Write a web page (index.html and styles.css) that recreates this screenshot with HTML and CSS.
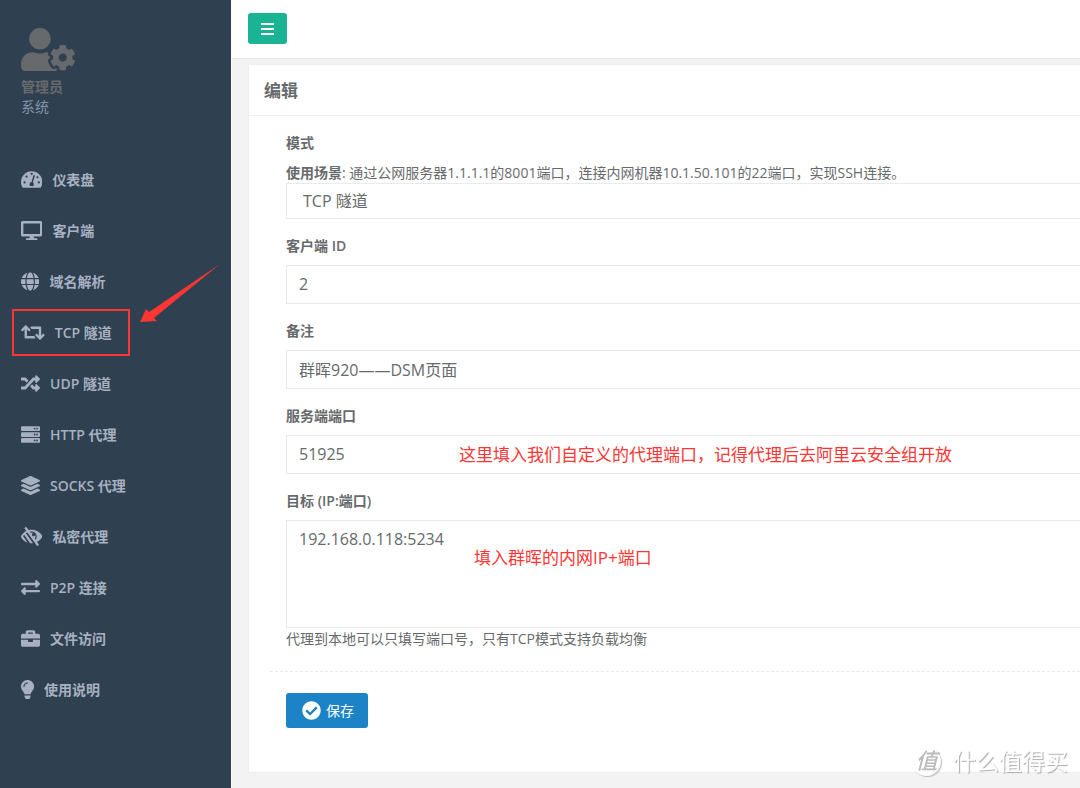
FILE: index.html
```html
<!DOCTYPE html>
<html lang="zh-CN">
<head>
<meta charset="utf-8">
<meta name="viewport" content="width=device-width, initial-scale=1">
<title>编辑 - TCP 隧道</title>
<link rel="stylesheet" href="styles.css">
</head>
<body>
<div class="layout">
  <aside class="sidebar">
    <div class="profile">
      <svg class="profile-icon" viewBox="0 0 640 512" aria-hidden="true"><path d="M610.5 373.3c2.6-14.1 2.6-28.5 0-42.6l25.8-14.9c3-1.7 4.3-5.2 3.3-8.5-6.7-21.6-18.2-41.2-33.2-57.4-2.3-2.5-6-3.1-9-1.4l-25.8 14.9c-10.9-9.3-23.4-16.5-36.9-21.3v-29.8c0-3.4-2.4-6.4-5.7-7.1-22.3-5-45-4.8-66.2 0-3.3.7-5.7 3.7-5.7 7.1v29.8c-13.5 4.8-26 12-36.9 21.3l-25.8-14.9c-2.9-1.7-6.7-1.1-9 1.4-15 16.2-26.5 35.8-33.2 57.4-1 3.3.4 6.8 3.3 8.5l25.8 14.9c-2.6 14.1-2.6 28.5 0 42.6l-25.8 14.9c-3 1.7-4.3 5.2-3.3 8.5 6.7 21.6 18.2 41.1 33.2 57.4 2.3 2.5 6 3.1 9 1.4l25.8-14.9c10.9 9.3 23.4 16.5 36.9 21.3v29.8c0 3.4 2.4 6.4 5.7 7.1 22.3 5 45 4.8 66.2 0 3.3-.7 5.7-3.7 5.7-7.1v-29.8c13.5-4.8 26-12 36.9-21.3l25.8 14.9c2.9 1.7 6.7 1.1 9-1.4 15-16.2 26.5-35.8 33.2-57.4 1-3.3-.4-6.8-3.3-8.5l-25.8-14.9zM496 400.5c-26.8 0-48.5-21.8-48.5-48.5s21.8-48.5 48.5-48.5 48.5 21.8 48.5 48.5-21.7 48.5-48.5 48.5zM224 256c70.7 0 128-57.3 128-128S294.7 0 224 0 96 57.3 96 128s57.3 128 128 128zm201.2 226.5c-2.3-1.2-4.6-2.6-6.8-3.9l-7.9 4.6c-6 3.4-12.8 5.3-19.6 5.3-10.9 0-21.4-4.6-28.9-12.6-18.3-19.8-32.3-43.9-40.2-69.6-5.5-17.7 1.9-36.4 17.9-45.7l7.9-4.6c-.1-2.6-.1-5.2 0-7.8l-7.9-4.6c-16-9.2-23.4-28-17.9-45.7.9-2.9 2.2-5.8 3.2-8.7-3.8-.3-7.5-1.2-11.4-1.2h-16.7c-22.2 10.2-46.9 16-72.9 16s-50.6-5.8-72.9-16h-16.7C60.2 288 0 348.2 0 422.4V464c0 26.5 21.5 48 48 48h352c10.1 0 19.5-3.2 27.2-8.5-1.2-3.8-2-7.7-2-11.8v-9.2z"/></svg>
      <strong class="profile-name">管理员</strong>
      <span class="profile-role">系统</span>
    </div>
    <nav>
      <ul class="menu">
        <li><a class="menu-link" href="#"><svg class="icon" viewBox="0 0 576 512" aria-hidden="true"><path d="M288 32C129 32 0 161 0 320c0 53 14 102 39 145 6 9 16 15 28 15h442c12 0 22-6 28-15 25-43 39-92 39-145C576 161 447 32 288 32z"/><g class="icon-cut"><circle cx="288" cy="104" r="30"/><circle cx="148" cy="178" r="30"/><circle cx="96" cy="336" r="30"/><circle cx="480" cy="336" r="30"/><circle cx="442" cy="196" r="28"/><path d="M356 132c13 4 20 17 16 30l-51 170c20 16 28 38 25 64-2 14-8 26-17 36h-82c-35-42-17-106 38-112l46-168c3-13 12-23 25-20z"/></g></svg>仪表盘</a></li>
        <li><a class="menu-link" href="#"><svg class="icon" viewBox="0 0 576 512" aria-hidden="true"><path d="M528 0H48C21.5 0 0 21.5 0 48v320c0 26.5 21.5 48 48 48h192l-16 48h-72c-13.3 0-24 10.7-24 24s10.7 24 24 24h272c13.3 0 24-10.7 24-24s-10.7-24-24-24h-72l-16-48h192c26.5 0 48-21.5 48-48V48c0-26.5-21.5-48-48-48zm-16 352H64V64h448v288z"/></svg>客户端</a></li>
        <li><a class="menu-link" href="#"><svg class="icon" viewBox="0 0 496 512" aria-hidden="true"><path d="M336.500 160C322 70.700 287.800 8 248 8s-74 62.700-88.500 152h177zM152 256c0 22.200 1.200 43.500 3.300 64h185.300c2.100-20.500 3.300-41.800 3.300-64s-1.200-43.500-3.300-64H155.300c-2.100 20.500-3.300 41.800-3.300 64zm324.700-96c-28.600-67.900-86.500-120.400-158-141.600 24.400 33.800 41.200 84.700 50 141.600h108zM177.200 18.400C105.800 39.600 47.800 92.100 19.300 160h108c8.700-56.900 25.500-107.800 49.900-141.600zM487.400 192H372.700c2.100 21 3.300 42.500 3.300 64s-1.200 43-3.300 64h114.600c5.500-20.500 8.600-41.800 8.600-64s-3.100-43.500-8.500-64zM120 256c0-21.500 1.200-43 3.300-64H8.600C3.200 212.500 0 233.800 0 256s3.200 43.500 8.600 64h114.600c-2-21-3.200-42.500-3.200-64zm39.500 96c14.500 89.300 48.700 152 88.500 152s74-62.700 88.500-152h-177zm159.300 141.600c71.400-21.200 129.400-73.700 158-141.600h-108c-8.800 56.900-25.600 107.800-50 141.600zM19.300 352c28.600 67.900 86.500 120.400 158 141.600-24.400-33.800-41.200-84.700-50-141.600h-108z"/></svg>域名解析</a></li>
        <li class="menu-marked"><a class="menu-link" href="#" aria-current="page"><svg class="icon" viewBox="0 0 640 512" aria-hidden="true"><path d="M629.657 343.598L528.971 444.284c-9.373 9.372-24.568 9.372-33.941 0L394.343 343.598c-9.373-9.373-9.373-24.569 0-33.941l10.823-10.823c9.562-9.562 25.133-9.340 34.419.492L480 342.118V160H292.451a24.005 24.005 0 0 1-16.971-7.029l-16-16C244.361 121.851 255.069 96 276.451 96H520c13.255 0 24 10.745 24 24v222.118l40.416-42.792c9.285-9.831 24.856-10.054 34.419-.492l10.823 10.823c9.372 9.372 9.372 24.569-.001 33.941zm-265.138 15.431A23.999 23.999 0 0 0 347.548 352H160V169.881l40.416 42.792c9.286 9.831 24.856 10.054 34.419.491l10.822-10.822c9.373-9.373 9.373-24.569 0-33.941L144.971 67.716c-9.373-9.373-24.569-9.373-33.941 0L10.343 168.402c-9.373 9.373-9.373 24.569 0 33.941l10.822 10.822c9.562 9.562 25.133 9.340 34.419-.491L96 169.882V392c0 13.255 10.745 24 24 24h243.549c21.382 0 32.090-25.851 16.971-40.971l-16.001-16z"/></svg>TCP 隧道</a>
          <svg class="arrow" viewBox="0 0 80 60" aria-hidden="true"><path d="M0 58L6 45L9 48L80 0L14 54L17 57z"/></svg></li>
        <li><a class="menu-link" href="#"><svg class="icon" viewBox="0 0 512 512" aria-hidden="true"><path d="M504.971 359.029c9.373 9.373 9.373 24.569 0 33.941l-80 79.984c-15.010 15.010-40.971 4.490-40.971-16.971V416h-58.785a12.004 12.004 0 0 1-8.773-3.812l-70.556-75.596 53.333-57.143L352 336h32v-39.981c0-21.438 25.943-31.998 40.971-16.971l80 79.981zM12 176h84l52.781 56.551 53.333-57.143-70.556-75.596A11.999 11.999 0 0 0 122.785 96H12c-6.627 0-12 5.373-12 12v56c0 6.627 5.373 12 12 12zm372 0v39.984c0 21.460 25.961 31.980 40.971 16.971l80-79.984c9.373-9.373 9.373-24.569 0-33.941l-80-79.981C409.943 24.021 384 34.582 384 56.019V96h-58.785a12.004 12.004 0 0 0-8.773 3.812L96 336H12c-6.627 0-12 5.373-12 12v56c0 6.627 5.373 12 12 12h110.785c3.326 0 6.503-1.381 8.773-3.812L352 176h32z"/></svg>UDP 隧道</a></li>
        <li><a class="menu-link" href="#"><svg class="icon" viewBox="0 0 512 512" aria-hidden="true"><rect y="32" width="512" height="128" rx="32"/><rect y="192" width="512" height="128" rx="32"/><rect y="352" width="512" height="128" rx="32"/><g class="icon-cut"><circle cx="368" cy="96" r="24"/><circle cx="432" cy="96" r="24"/><circle cx="368" cy="256" r="24"/><circle cx="432" cy="256" r="24"/><circle cx="368" cy="416" r="24"/><circle cx="432" cy="416" r="24"/></g></svg>HTTP 代理</a></li>
        <li><a class="menu-link" href="#"><svg class="icon" viewBox="0 0 512 512" aria-hidden="true"><path d="M12.410 148.020l232.940 105.670c6.800 3.090 14.490 3.090 21.290 0l232.940-105.670c16.550-7.510 16.550-32.520 0-40.030L266.650 2.310a25.607 25.607 0 0 0-21.290 0L12.410 107.980c-16.550 7.510-16.550 32.530 0 40.040zm487.180 88.280l-58.090-26.330-161.640 73.270c-7.560 3.430-15.590 5.170-23.860 5.170s-16.290-1.740-23.860-5.170L70.510 209.970l-58.100 26.330c-16.550 7.500-16.550 32.500 0 40l232.940 105.590c6.800 3.080 14.490 3.080 21.290 0L499.590 276.300c16.550-7.500 16.550-32.500 0-40zm0 127.800l-57.870-26.230-161.860 73.370c-7.560 3.430-15.590 5.170-23.860 5.170s-16.290-1.740-23.860-5.170L70.290 337.870 12.410 364.100c-16.550 7.500-16.550 32.500 0 40l232.940 105.590c6.800 3.080 14.490 3.080 21.290 0L499.590 404.100c16.550-7.500 16.550-32.500 0-40z"/></svg>SOCKS 代理</a></li>
        <li><a class="menu-link" href="#"><svg class="icon" viewBox="0 0 576 512" aria-hidden="true"><path d="M569.344 231.631C512.960 135.949 407.810 72 288 72c-28.468 0-56.102 3.619-82.451 10.414L152.778 10.240c-7.601-10.858-22.564-13.500-33.423-5.900l-13.114 9.178c-10.860 7.601-13.502 22.566-5.900 33.426l43.131 58.395C89.449 131.730 40.228 174.683 6.682 231.581c-.010.017-.023.033-.034.050-8.765 14.875-8.964 33.528 0 48.739 38.500 65.332 99.742 115.862 172.859 141.349L55.316 244.302A272.194 272.194 0 0 1 83.610 208.390l119.400 170.580h.010l40.630 58.040a330.055 330.055 0 0 0 78.940 1.170l-189.980-271.400a277.628 277.628 0 0 1 38.777-21.563l251.836 356.544c7.601 10.858 22.564 13.499 33.423 5.900l13.114-9.178c10.860-7.601 13.502-22.567 5.900-33.426l-43.120-58.377-.007-.009c57.161-27.978 104.835-72.040 136.810-126.301a47.938 47.938 0 0 0 .001-48.739zM390.026 345.940l-19.066-27.230c24.682-32.567 27.711-76.353 8.800-111.680v.030c0 23.650-19.170 42.820-42.820 42.820-23.828 0-42.820-19.349-42.820-42.820 0-23.650 19.170-42.820 42.820-42.820h.030c-24.750-13.249-53.522-15.643-79.510-7.680l-19.068-27.237C253.758 123.306 270.488 120 288 120c75.162 0 136 60.827 136 136 0 34.504-12.833 65.975-33.974 89.940z"/></svg>私密代理</a></li>
        <li><a class="menu-link" href="#"><svg class="icon" viewBox="0 0 512 512" aria-hidden="true"><path d="M0 168v-16c0-13.255 10.745-24 24-24h360V80c0-21.367 25.899-32.042 40.971-16.971l80 80c9.372 9.373 9.372 24.569 0 33.941l-80 80C409.956 271.982 384 261.456 384 240v-48H24c-13.255 0-24-10.745-24-24zm488 152H128v-48c0-21.314-25.862-32.080-40.971-16.971l-80 80c-9.372 9.373-9.372 24.569 0 33.941l80 80C102.057 463.997 128 453.437 128 432v-48h360c13.255 0 24-10.745 24-24v-16c0-13.255-10.745-24-24-24z"/></svg>P2P 连接</a></li>
        <li><a class="menu-link" href="#"><svg class="icon" viewBox="0 0 512 512" aria-hidden="true"><path d="M320 336c0 8.840-7.160 16-16 16h-96c-8.840 0-16-7.160-16-16v-48H0v144c0 25.600 22.400 48 48 48h416c25.600 0 48-22.400 48-48V288H320v48zm144-208h-80V80c0-25.600-22.400-48-48-48H176c-25.600 0-48 22.400-48 48v48H48c-25.600 0-48 22.400-48 48v80h512v-80c0-25.600-22.400-48-48-48zm-144 0H192V96h128v32z"/></svg>文件访问</a></li>
        <li><a class="menu-link" href="#"><svg class="icon" viewBox="0 0 352 512" aria-hidden="true"><path d="M96.060 454.350c.010 6.290 1.870 12.450 5.360 17.690l17.090 25.690a31.990 31.990 0 0 0 26.640 14.280h61.710a31.990 31.990 0 0 0 26.640-14.280l17.090-25.690a31.989 31.989 0 0 0 5.360-17.690l.040-38.350H96.010l.050 38.350zM0 176c0 44.370 16.450 84.850 43.560 115.780 16.520 18.850 42.360 58.230 52.210 91.450.040.260.070.520.110.780h160.240c.040-.260.070-.510.110-.780 9.850-33.220 35.690-72.600 52.210-91.450C335.550 260.850 352 220.370 352 176 352 78.610 272.910-.3 175.450 0 73.440.310 0 82.970 0 176zm176-80c-44.110 0-80 35.890-80 80 0 8.840-7.160 16-16 16s-16-7.160-16-16c0-61.760 50.240-112 112-112 8.840 0 16 7.160 16 16s-7.160 16-16 16z"/></svg>使用说明</a></li>
      </ul>
    </nav>
  </aside>

  <div class="page">
    <header class="topbar">
      <button class="toggle" type="button" aria-label="菜单"><svg class="toggle-icon" viewBox="0 0 14 14" aria-hidden="true"><path d="M0 2h13M0 7h13M0 12h13"/></svg></button>
    </header>
    <main class="card">
      <h1 class="card-title">编辑</h1>
      <form class="form">
        <div class="group">
          <label class="label" for="mode">模式</label>
          <p class="hint"><b>使用场景</b>: 通过公网服务器1.1.1.1的8001端口，连接内网机器10.1.50.101的22端口，实现SSH连接。</p>
          <select class="control select" id="mode"><option>TCP 隧道</option></select>
        </div>
        <div class="group">
          <label class="label" for="client">客户端 ID</label>
          <input class="control" id="client" type="text" value="2">
        </div>
        <div class="group">
          <label class="label" for="remark">备注</label>
          <input class="control" id="remark" type="text" value="群晖920——DSM页面">
        </div>
        <div class="group">
          <label class="label" for="port">服务端端口</label>
          <input class="control" id="port" type="text" value="51925">
          <span class="note note-port">这里填入我们自定义的代理端口，记得代理后去阿里云安全组开放</span>
        </div>
        <div class="group">
          <label class="label" for="target">目标 (IP:端口)</label>
          <textarea class="control textarea" id="target">192.168.0.118:5234</textarea>
          <span class="note note-target">填入群晖的内网IP+端口</span>
          <p class="hint">代理到本地可以只填写端口号，只有TCP模式支持负载均衡</p>
        </div>
        <div class="actions">
          <button class="save" type="button"><svg class="icon" viewBox="0 0 512 512" aria-hidden="true"><path d="M504 256c0 136.967-111.033 248-248 248S8 392.967 8 256 119.033 8 256 8s248 111.033 248 248zM227.314 387.314l184-184c6.248-6.248 6.248-16.379 0-22.627l-22.627-22.627c-6.248-6.249-16.379-6.249-22.628 0L216 308.118l-70.059-70.059c-6.248-6.248-16.379-6.248-22.628 0l-22.627 22.627c-6.248 6.248-6.248 16.379 0 22.627l104 104c6.249 6.249 16.379 6.249 22.628.001z"/></svg>保存</button>
        </div>
      </form>
    </main>
  </div>
</div>
<div class="watermark"><span class="watermark-badge">值</span><span>什么值得买</span></div>
</body>
</html>
```
FILE: styles.css
```css
*,
*::before {
  box-sizing: border-box;
}

body {
  margin: 0;
  background: #f3f3f4;
  color: #676a6c;
  font-family: "Open Sans", "Noto Sans CJK SC", sans-serif;
  font-size: 14px;
  line-height: 20px;
}

.layout {
  display: flex;
  min-height: 100vh;
}

/* Sidebar */
.sidebar {
  flex: 0 0 231px;
  background: #2f4050;
}

.profile {
  display: flex;
  flex-direction: column;
  padding: 28px 21px 37px;
}

.profile-icon {
  width: 54px;
  height: 43px;
  margin-bottom: 6px;
  fill: #676a6c;
}

.profile-name {
  color: #676a6c;
}

.profile-role {
  color: #8095a8;
}

.menu {
  margin: 0;
  padding: 0;
  list-style: none;
}

.menu-link {
  display: flex;
  align-items: center;
  gap: 10px;
  height: 51px;
  padding-left: 21px;
  color: #a7b1c2;
  font-weight: 600;
  text-decoration: none;
}

.icon {
  height: 19px;
  width: auto;
  fill: currentColor;
}

.icon-cut {
  fill: #2f4050;
}

.menu-marked {
  position: relative;
}

.menu-marked::before {
  content: "";
  position: absolute;
  left: 12px;
  top: 2px;
  width: 118px;
  height: 47px;
  border: 2px solid #fb3634;
  pointer-events: none;
}

.arrow {
  position: absolute;
  left: 140px;
  top: -43px;
  width: 80px;
  height: 60px;
  fill: #fb3634;
}

/* Page */
.page {
  flex: 1;
  min-width: 0;
  border-left: 1px solid #fff;
}

.topbar {
  padding: 13px 16px 14px;
  background: #fff;
  border-bottom: 1px solid #e7eaec;
}

.toggle {
  display: flex;
  align-items: center;
  justify-content: center;
  width: 39px;
  height: 31px;
  padding: 0;
  border: 0;
  border-radius: 3px;
  background: #1ab394;
}

.toggle-icon {
  width: 14px;
  height: 14px;
  fill: none;
  stroke: #fff;
  stroke-width: 2;
}

.card {
  margin: 5px 0 15px 16px;
  background: #fff;
  border: 1px solid #eceeef;
  border-right: 0;
}

.card-title {
  margin: 0;
  padding: 15px 15px 14px;
  border-bottom: 1px solid #eef0f1;
  font-size: 17px;
  line-height: 21px;
}

.form {
  padding: 17px 0 44px 21px;
}

.group {
  position: relative;
  padding: 0 0 17px 16px;
}

.label {
  display: block;
  margin-bottom: 9px;
  font-weight: 600;
}

.hint {
  margin: 0;
  line-height: 21px;
}

.control {
  display: block;
  width: 100%;
  height: 39px;
  padding: 0 12px 2px;
  border: 1px solid #e9eaeb;
  border-right: 0;
  border-radius: 1px 0 0 1px;
  background: #fff;
  color: inherit;
  font: inherit;
  font-size: 16px;
}

.select {
  height: 36px;
  padding: 0 16px;
  appearance: none;
}

.textarea {
  height: 108px;
  padding: 8px 12px;
  resize: none;
}

.note {
  position: absolute;
  color: #fb3634;
  font-size: 17px;
  line-height: 24px;
}

.note-port {
  left: 189px;
  top: 37px;
}

.note-target {
  left: 204px;
  top: 55px;
}

.actions {
  margin-top: 5px;
  padding: 21px 16px 0;
  border-top: 1px dashed #e7eaec;
}

.save {
  display: flex;
  align-items: center;
  gap: 5px;
  height: 35px;
  padding: 0 14px 0 16px;
  border: 0;
  border-radius: 3px;
  background: #1c84c6;
  color: #fff;
  font: inherit;
}

/* Watermark */
.watermark {
  position: fixed;
  right: 12px;
  bottom: 12px;
  display: flex;
  align-items: center;
  gap: 12px;
  color: #fff;
  font-size: 23px;
  line-height: 30px;
  text-shadow: 1px 1px 1px #aaa;
}

.watermark-badge {
  width: 29px;
  height: 29px;
  border-radius: 50%;
  background: #fff;
  box-shadow: 1px 1px 1px #bbb;
  color: #bbb;
  font-size: 22px;
  font-style: italic;
  font-weight: 500;
  line-height: 27px;
  text-align: center;
  text-shadow: none;
}
```
